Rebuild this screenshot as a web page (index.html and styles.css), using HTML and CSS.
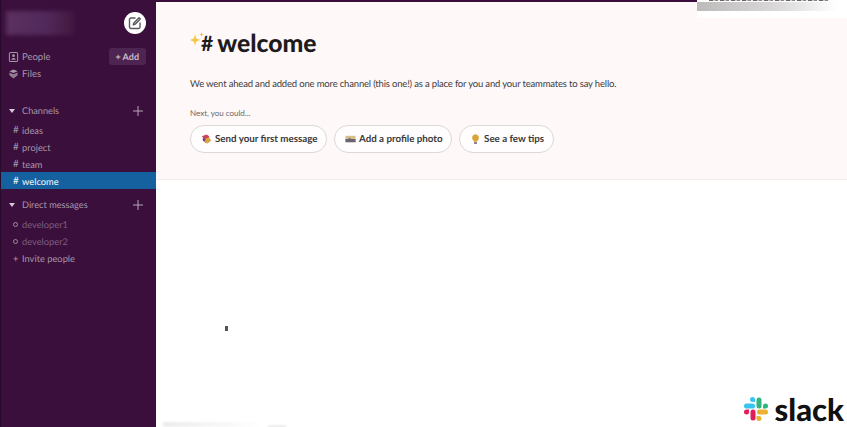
FILE: index.html
```html
<!DOCTYPE html>
<html lang="en">
<head>
    <meta charset="UTF-8">
    <meta name="viewport" content="width=device-width, initial-scale=1.0">
    <title>Slack welcome</title>
    <link rel="stylesheet" href="styles.css">
</head>
<body>
    <div class="app">
        <aside class="sidebar">
            <div class="team-row">
                <div class="team-name"></div>
                <div class="compose">
                    <svg width="14" height="14" viewBox="0 0 14 14" fill="none" stroke="#5a5560" stroke-width="1.4" stroke-linecap="round" stroke-linejoin="round">
                        <path d="M7 2H3a1.5 1.5 0 0 0-1.5 1.5v7.5A1.5 1.5 0 0 0 3 12.500h7.500A1.500 1.500 0 0 0 12 11V7"/>
                        <path d="M11 1.800l1.300 1.300L7.200 8.200l-1.900.6.6-1.900z"/>
                    </svg>
                </div>
            </div>

            <div class="nav-row people-row">
                <svg class="nav-icon" width="11" height="12" viewBox="0 0 12 12" fill="none" stroke="#a896a9" stroke-width="1.100">
                    <rect x="1.500" y="1" width="9" height="10" rx="1.500"/>
                    <circle cx="6" cy="4.600" r="1.500" fill="#a896a9" stroke="none"/>
                    <path d="M3.500 9c.4-1.500 1.300-2 2.500-2s2.100.5 2.500 2z" fill="#a896a9" stroke="none"/>
                </svg>
                <span class="nav-label">People</span>
                <span class="add-btn">+ Add</span>
            </div>
            <div class="nav-row files-row">
                <svg class="nav-icon" width="11" height="12" viewBox="0 0 12 12" fill="#a896a9">
                    <path d="M6 1l4.500 2L6 5 1.500 3z"/>
                    <path d="M1.500 4.300L6 6.300l4.500-2v3L6 11 1.500 7.300z" opacity=".8"/>
                </svg>
                <span class="nav-label">Files</span>
            </div>

            <div class="section-head channels-head">
                <span class="caret"></span>
                <span class="section-title">Channels</span>
                <svg class="plus" width="10" height="10" viewBox="0 0 10 10" stroke="#b5a5b6" stroke-width="1">
                    <path d="M5 0v10M0 5h10"/>
                </svg>
            </div>
            <div class="channel"><span class="hash">#</span>ideas</div>
            <div class="channel"><span class="hash">#</span>project</div>
            <div class="channel"><span class="hash">#</span>team</div>
            <div class="channel active"><span class="hash">#</span>welcome</div>

            <div class="section-head dm-head">
                <span class="caret"></span>
                <span class="section-title">Direct messages</span>
                <svg class="plus" width="10" height="10" viewBox="0 0 10 10" stroke="#b5a5b6" stroke-width="1">
                    <path d="M5 0v10M0 5h10"/>
                </svg>
            </div>
            <div class="channel dm"><span class="status"></span>developer1</div>
            <div class="channel dm"><span class="status"></span>developer2</div>
            <div class="channel"><span class="invite-plus">+</span>Invite people</div>
        </aside>

        <main class="main">
            <section class="banner">
                <h1 class="title">
                    <svg class="sparkle" width="15" height="19" viewBox="0 0 15 19" fill="#f2c744">
                        <path d="M5 3.500l1.300 3.900 3.900 1.600-3.900 1.600L5 14.500l-1.300-3.900L-.2 9l3.900-1.600z"/>
                        <path d="M11.500 1l.6 1.700 1.700.7-1.700.7-.6 1.700-.6-1.700-1.700-.7 1.700-.7z"/>
                    </svg>
                    <span class="title-hash">#</span>welcome
                </h1>
                <p class="intro">We went ahead and added one more channel (this one!) as a place for you and your teammates to say hello.</p>
                <p class="next">Next, you could...</p>
                <div class="actions">
                    <div class="pill">
                        <svg width="11" height="12" viewBox="0 0 12 12">
                            <path d="M1 3l5-2 3 2-1 3-4 1z" fill="#c9455a"/>
                            <path d="M4 6l5-2 2 4-4 3-3-1z" fill="#d9a441"/>
                            <path d="M2 5l3 1-1 3-2-1z" fill="#6b3f78"/>
                        </svg>
                        Send your first message
                    </div>
                    <div class="pill">
                        <svg width="11" height="12" viewBox="0 0 12 12">
                            <rect x="0.500" y="2.500" width="11" height="7" fill="#d9c08a"/>
                            <rect x="0.500" y="6" width="11" height="3.500" fill="#6a6570"/>
                            <path d="M3 6l2-2 2 2z" fill="#8a8590"/>
                        </svg>
                        Add a profile photo
                    </div>
                    <div class="pill">
                        <svg width="11" height="12" viewBox="0 0 12 12">
                            <path d="M6 .800a3.800 3.800 0 0 0-2 7V9h4V7.800a3.800 3.800 0 0 0-2-7z" fill="#d9a438"/>
                            <rect x="4.500" y="9.500" width="3" height="1.800" fill="#6b6470"/>
                        </svg>
                        See a few tips
                    </div>
                </div>
            </section>
        </main>
    </div>

    <!-- bits lying over the page -->
    <div class="smudge-top"></div>
    <div class="smudge-bottom"></div>
    <div class="cursor"></div>
    <div class="brand">
        <svg width="26" height="26" viewBox="0 0 26 26">
            <path d="M9.500 1a2.500 2.500 0 0 0 0 5H12V3.500A2.500 2.500 0 0 0 9.500 1z" fill="#36c5f0"/>
            <path d="M3.500 7.500a2.500 2.500 0 0 0 0 5h6a2.500 2.500 0 0 0 0-5z" fill="#36c5f0"/>
            <path d="M25 10a2.500 2.500 0 0 0-5 0v2.500h2.500A2.500 2.500 0 0 0 25 10z" fill="#2eb67d"/>
            <path d="M18.500 4a2.500 2.500 0 0 0-5 0v6a2.500 2.500 0 0 0 5 0z" fill="#2eb67d"/>
            <path d="M16 25a2.500 2.500 0 0 0 0-5h-2.500v2.500A2.500 2.500 0 0 0 16 25z" fill="#ecb22e"/>
            <path d="M22.500 18.500a2.500 2.500 0 0 0 0-5h-6a2.500 2.500 0 0 0 0 5z" fill="#ecb22e"/>
            <path d="M1 16a2.500 2.500 0 0 0 5 0v-2.500H3.500A2.500 2.500 0 0 0 1 16z" fill="#e01e5a"/>
            <path d="M7.500 22a2.500 2.500 0 0 0 5 0v-6a2.500 2.500 0 0 0-5 0z" fill="#e01e5a"/>
        </svg>
        <span class="brand-name">slack</span>
    </div>
</body>
</html>
```

FILE: styles.css
```css
html, body {
    margin: 0;
    height: 100%;
    overflow: hidden;
    background: white;
    font-family: "Lato", "Open Sans", sans-serif;
    text-rendering: geometricPrecision;
}

.app {
    display: flex;
    height: 427px;
}

/* sidebar */
.sidebar {
    width: 156px;
    flex: none;
    box-sizing: border-box;
    border-left: 1px solid #2a0a2c;
    background-color: #3a0f3c;
    color: #a896a9;
    font-size: 9.500px;
    padding-top: 10px;
}

.team-row {
    display: flex;
    justify-content: space-between;
    align-items: center;
    padding: 0 10px 0 5px;
    height: 26px;
}

.team-name {
    width: 68px;
    height: 24px;
    background: linear-gradient(90deg, #5a3160, #51295a 60%, #43173f);
    filter: blur(2px);
}

.compose {
    width: 22px;
    height: 22px;
    border-radius: 50%;
    background-color: white;
    display: flex;
    align-items: center;
    justify-content: center;
}

.nav-row {
    display: flex;
    align-items: center;
    height: 17px;
    padding: 0 10px 0 7px;
}

.people-row {
    margin-top: 12px;
}

.nav-icon {
    margin-right: 3px;
}

.nav-label {
    flex: 1;
    padding-top: 2px;
}

.add-btn {
    background-color: #4e2452;
    color: #c9bbca;
    font-size: 9px;
    font-weight: 700;
    padding: 3px 7px;
    border-radius: 3px;
}

.section-head {
    display: flex;
    align-items: center;
    height: 17px;
    padding: 0 13px 0 8px;
}

.channels-head {
    margin-top: 20px;
}

.dm-head {
    margin-top: 7px;
}

.caret {
    width: 0;
    height: 0;
    border-left: 3px solid transparent;
    border-right: 3px solid transparent;
    border-top: 4px solid #d6c9d7;
    margin-right: 7px;
}

.section-title {
    flex: 1;
    font-size: 9.200px;
}

.channel {
    display: flex;
    align-items: center;
    box-sizing: border-box;
    height: 17px;
    padding: 1px 0 0 12px;
    font-size: 9.300px;
}

.channels-head + .channel {
    margin-top: 2px;
}

.dm-head + .channel {
    margin-top: 2px;
}

.hash {
    width: 9px;
    font-size: 10px;
}

.channel.active {
    background-color: #15619f;
    color: #e6edf3;
    font-weight: 500;
}

.dm {
    color: #7c5e81;
}

.status {
    width: 3px;
    height: 3px;
    border: 1px solid #a08ba3;
    border-radius: 50%;
    margin-right: 4px;
}

.invite-plus {
    width: 9px;
}

/* main panel */
.main {
    flex: 1;
    border-top: 2px solid #3a0f3c;
    min-width: 0;
}

.banner {
    height: 178px;
    box-sizing: border-box;
    background-color: #fef8f8;
    border-bottom: 1px solid #f3eded;
    padding: 26px 0 0 34px;
}

.title {
    margin: 0;
    display: flex;
    align-items: center;
    font-size: 24.700px;
    font-weight: 900;
    color: #1d1c1d;
    height: 30px;
}

.sparkle {
    margin-right: -4px;
    margin-top: -6px;
    overflow: visible;
}

.title-hash {
    font-weight: 700;
    font-size: 21px;
    margin-right: 4px;
}

.intro {
    margin: 21px 0 0;
    font-size: 9.500px;
    letter-spacing: -0.175px;
    color: #3d3c3d;
}

.next {
    margin: 18px 0 0;
    font-size: 8px;
    color: #6b6a6b;
}

.actions {
    display: flex;
    gap: 7px;
    margin-top: 7px;
}

.pill {
    display: flex;
    align-items: center;
    gap: 3px;
    height: 26px;
    padding: 0 8.500px 0 10px;
    background-color: #fffdfd;
    border: 1px solid #ddd8d8;
    border-radius: 14px;
    font-size: 9.750px;
    font-weight: 700;
    color: #3a393a;
}

/* overlays */
.smudge-top {
    position: absolute;
    top: 0;
    right: 0;
    width: 150px;
    height: 18px;
    background: white;
}

.smudge-top::before {
    content: "";
    position: absolute;
    top: 2px;
    left: 0;
    width: 140px;
    height: 9px;
    background: linear-gradient(90deg, #bdbaba, #dcdada 60%, white);
}

.smudge-top::after {
    content: "";
    position: absolute;
    top: 0;
    left: 12px;
    width: 120px;
    height: 1px;
    background: repeating-linear-gradient(90deg, #666 0 4px, #ccc 4px 6px, #888 6px 9px, #eee 9px 11px);
}

.smudge-bottom {
    position: absolute;
    left: 163px;
    bottom: 0;
    width: 100px;
    height: 5px;
    background: linear-gradient(90deg, #ececec, white);
    filter: blur(1px);
}

.smudge-bottom::after {
    content: "";
    position: absolute;
    left: 105px;
    bottom: 0;
    width: 18px;
    height: 1px;
    background-color: #ccc;
}

.cursor {
    position: absolute;
    left: 225px;
    top: 326px;
    width: 3px;
    height: 5px;
    background-color: #555;
    filter: blur(0.7px);
}

.brand {
    position: absolute;
    right: 3px;
    bottom: 3px;
    display: flex;
    align-items: center;
    gap: 6px;
}

.brand-name {
    font-size: 31px;
    font-weight: 900;
    color: #111;
    line-height: 30px;
}
```
